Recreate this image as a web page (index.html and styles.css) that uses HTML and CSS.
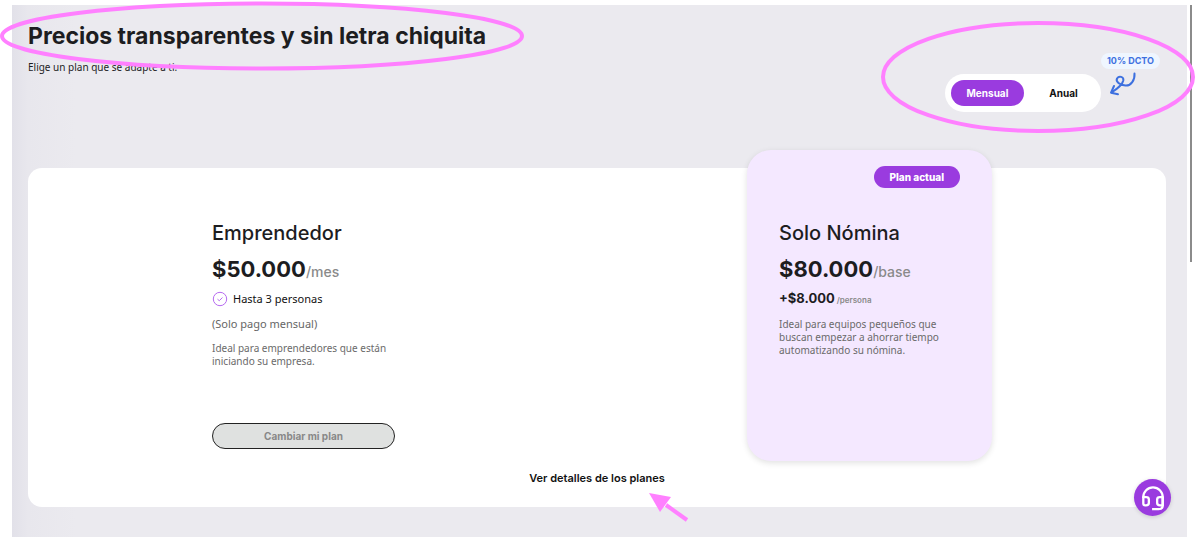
FILE: index.html
```html
<!DOCTYPE html>
<html lang="es">
<head>
<meta charset="utf-8">
<meta name="viewport" content="width=device-width, initial-scale=1">
<title>Precios</title>
<link rel="stylesheet" href="styles.css">
</head>
<body>
<div class="page">
  <main class="content">
    <header class="intro">
      <div class="intro-text">
        <h1 class="title">Precios transparentes y sin letra chiquita</h1>
        <p class="subtitle">Elige un plan que se adapte a ti.</p>
      </div>
      <div class="billing">
        <div class="switch" role="group" aria-label="Periodo de pago">
          <button type="button" class="option option-active" aria-pressed="true">Mensual</button>
          <button type="button" class="option" aria-pressed="false">Anual</button>
        </div>
        <div class="discount">
          <span class="discount-tag">10% DCTO</span>
          <svg class="discount-arrow" viewBox="0 0 28 24" aria-hidden="true">
            <path d="M25.500 1.500C26 8 22 14 16.500 13.600C10.500 13 6.500 9.500 8 6.500C10 3.500 15 4.500 14.300 8.500C13.500 12.500 8 17 2.500 20.500M5 14L2 20.700L9 22.200"/>
          </svg>
        </div>
      </div>
    </header>

    <section class="panel">
      <div class="plans">
        <article class="plan">
          <h2 class="plan-name">Emprendedor</h2>
          <p class="price"><strong class="amount">$50.000</strong><span class="unit">/mes</span></p>
          <p class="feature">
            <svg class="check" viewBox="0 0 16 16" aria-hidden="true"><circle cx="8" cy="8" r="6.700"/><path d="M5.500 8.200L7.300 9.700L10.500 6.500"/></svg>
            Hasta 3 personas
          </p>
          <p class="note">(Solo pago mensual)</p>
          <p class="description">Ideal para emprendedores que están iniciando su empresa.</p>
          <button type="button" class="change" disabled>Cambiar mi plan</button>
        </article>
        <article class="plan plan-current">
          <span class="current-tag">Plan actual</span>
          <h2 class="plan-name">Solo Nómina</h2>
          <p class="price"><strong class="amount">$80.000</strong><span class="unit">/base</span></p>
          <p class="extra"><strong class="extra-amount">+$8.000</strong><span class="extra-unit">/persona</span></p>
          <p class="description">Ideal para equipos pequeños que buscan empezar a ahorrar tiempo automatizando su nómina.</p>
        </article>
      </div>
      <a class="details" href="#detalles">Ver detalles de los planes
        <svg class="mark mark-arrow" viewBox="0 0 40 32" aria-hidden="true"><path d="M38 28L17 13" stroke-width="4"/><path class="mark-head" d="M0 1L22 5L11 20Z"/></svg>
      </a>
    </section>
  </main>
  <div class="scroll-thumb"></div>

  <svg class="mark mark-title" viewBox="0 0 524 72" aria-hidden="true"><ellipse cx="262" cy="36" rx="260" ry="32.500"/></svg>
  <svg class="mark mark-billing" viewBox="0 0 316 114" aria-hidden="true"><ellipse cx="158" cy="57" rx="155" ry="54"/></svg>

  <button type="button" class="help" aria-label="Ayuda">
    <svg class="help-icon" viewBox="0 0 26 28" aria-hidden="true">
      <path d="M2.500 14V13A10.500 10.500 0 0 1 23.500 13V22C23.500 25 22 26 19 26H12"/>
      <path d="M2.500 13H5.500Q8.500 13 8.500 15.500V19.500Q8.500 22 5.500 22H4.500Q2.500 22 2.500 20ZM23.500 13H20.500Q17.500 13 17.500 15.500V19.500Q17.500 22 20.500 22H23.500Z"/>
    </svg>
  </button>
</div>
</body>
</html>
```
FILE: styles.css
```css
* { box-sizing: border-box; }

body {
  margin: 0;
  background: #fff;
  color: #1d1d1f;
  font-family: Inter, "Liberation Sans", sans-serif;
}

h1, h2, p { margin: 0; }

button { font: inherit; cursor: pointer; }

.page {
  position: relative;
  display: flex;
  align-items: flex-start;
  min-height: 100vh;
  padding: 5px 4px 0 12px;
  overflow: hidden;
}

.content {
  flex: 1;
  align-self: stretch;
  padding: 16px 21px 30px 16px;
  background: linear-gradient(90deg, #e2e1e9 0, #e8e7ed 16px, #ebeaef 64px);
}

.scroll-thumb {
  width: 2px;
  height: 257px;
  margin-left: 3px;
  background: #8b8b8b;
}

.intro {
  display: flex;
  justify-content: space-between;
  min-height: 147px;
}

.title {
  font-size: 23px;
  line-height: 31px;
  font-weight: 700;
}

.subtitle {
  margin-top: 8px;
  font: 10px/14px "Noto Sans", sans-serif;
}

.billing {
  display: flex;
  align-items: flex-start;
  padding: 32px 6px 0 0;
}

.switch {
  display: flex;
  gap: 8px;
  width: 156px;
  margin-top: 21px;
  padding: 6px;
  border-radius: 19px;
  background: #fff;
}

.option {
  flex: 1;
  height: 26px;
  padding: 0;
  border: 0;
  border-radius: 13px;
  background: none;
  color: #111;
  font-size: 10px;
  line-height: 26px;
  font-weight: 700;
}

.option-active {
  flex: 0 0 73px;
  background: #9a3bdf;
  color: #fff;
}

.discount {
  display: flex;
  flex-direction: column;
  gap: 3px;
}

.discount-tag {
  padding: 0 6px;
  border-radius: 8px;
  background: #eff6ff;
  color: #3d70df;
  font-size: 9px;
  line-height: 16px;
  font-weight: 700;
}

.discount-arrow {
  width: 28px;
  height: 24px;
  margin-left: 8px;
  fill: none;
  stroke: #3d70df;
  stroke-width: 2;
  stroke-linecap: round;
  stroke-linejoin: round;
}

.panel {
  display: flex;
  flex-direction: column;
  align-items: center;
  padding-bottom: 21px;
  border-radius: 14px;
  background: #fff;
}

.plans {
  display: flex;
  justify-content: space-between;
  align-self: stretch;
  margin-top: -18px;
  padding: 0 174px 0 152px;
}

.plan {
  position: relative;
  display: flex;
  flex-direction: column;
  width: 245px;
  min-height: 311px;
  padding: 69px 30px 12px 32px;
  border-radius: 24px;
}

.plan-current {
  background: #f4e8ff;
  box-shadow: 0 2px 6px rgba(0, 0, 0, 0.12);
}

.current-tag {
  position: absolute;
  top: 16px;
  right: 32px;
  padding: 0 16px;
  border-radius: 11px;
  background: #9a3bdf;
  color: #fff;
  font-size: 10px;
  line-height: 22px;
  font-weight: 800;
}

.plan-name {
  font-size: 20px;
  line-height: 28px;
  font-weight: 500;
}

.price {
  display: flex;
  align-items: baseline;
  margin-top: 8px;
  line-height: 28px;
}

.amount {
  font-size: 22px;
  font-weight: 700;
}

.unit {
  color: #8a8a8a;
  font-size: 14px;
  font-weight: 500;
}

.feature {
  display: flex;
  align-items: center;
  gap: 5px;
  margin-top: 5px;
  color: #111;
  font: 11px/16px "Noto Sans", sans-serif;
}

.check {
  width: 16px;
  height: 16px;
  fill: none;
  stroke: #b66af0;
  stroke-width: 1;
}

.note {
  margin-top: 9px;
  color: #666;
  font: 11px/16px "Noto Sans", sans-serif;
}

.description {
  margin-top: 10px;
  color: #6a6a6a;
  font: 10px/13px "Noto Sans", sans-serif;
}

.change {
  height: 26px;
  margin-top: auto;
  border: 1px solid #222;
  border-radius: 13px;
  background: #dfe1e0;
  color: #888;
  font-size: 10px;
  font-weight: 700;
}

.extra {
  display: flex;
  align-items: baseline;
  gap: 2px;
  margin-top: 4px;
  line-height: 16px;
}

.extra-amount {
  font-size: 13px;
  font-weight: 700;
}

.extra-unit {
  color: #8a8a8a;
  font-size: 8px;
  font-weight: 600;
}

.details {
  position: relative;
  margin-top: 9px;
  color: #111;
  font-size: 11px;
  line-height: 16px;
  font-weight: 600;
  text-decoration: none;
}

.mark {
  position: absolute;
  fill: none;
  stroke: #ff80ff;
  stroke-width: 4;
  pointer-events: none;
}

.mark-title {
  top: 0;
  left: 0;
  width: 524px;
  height: 72px;
}

.mark-billing {
  top: 20px;
  right: 0;
  width: 316px;
  height: 114px;
}

.mark-arrow {
  top: 22px;
  right: -24px;
  width: 40px;
  height: 32px;
}

.mark-head {
  fill: #ff80ff;
  stroke: none;
}

.help {
  position: absolute;
  right: 25px;
  bottom: 21px;
  display: grid;
  place-items: center;
  width: 37px;
  height: 37px;
  padding: 0;
  border: 0;
  border-radius: 50%;
  background: #9a3bdf;
  box-shadow: 0 1px 4px rgba(0, 0, 0, 0.15);
}

.help-icon {
  width: 24px;
  height: 26px;
  fill: none;
  stroke: #fff;
  stroke-width: 2.500;
  stroke-linejoin: round;
}
```
